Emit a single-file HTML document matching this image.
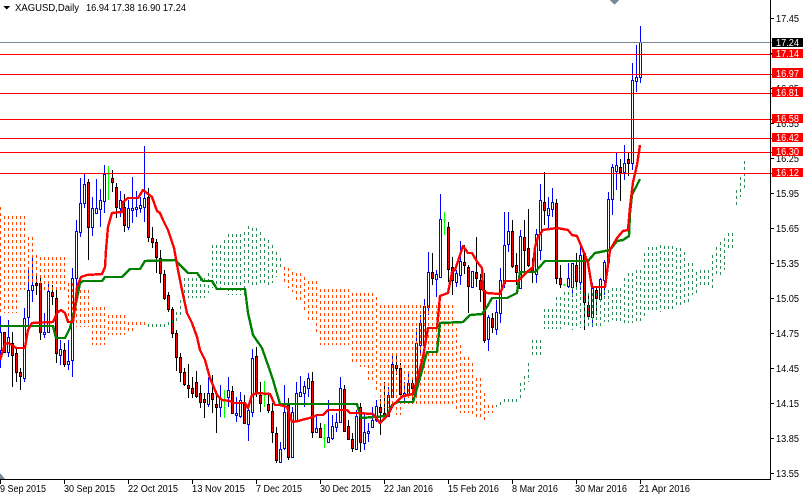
<!DOCTYPE html>
<html><head><meta charset="utf-8"><title>XAGUSD Daily</title>
<style>html,body{margin:0;padding:0;background:#fff;width:805px;height:497px;overflow:hidden}svg{display:block}text{font-family:"Liberation Sans",sans-serif;font-size:10px;fill:#000}</style></head>
<body>
<svg width="805" height="497" viewBox="0 0 805 497" xmlns="http://www.w3.org/2000/svg" shape-rendering="crispEdges">
<rect width="805" height="497" fill="#fff"/>
<!-- blue wicks -->
<path fill="none" stroke="#0000ff" d="M.5 316V368M8.5 320V357M24.5 308V382M28.5 270V325M32.5 257V302M44.5 313V338M48.5 283V333M60.5 340V365M68.5 340V370M72.5 268V377M76.5 220V290M80.5 178V237M84.5 173V208M92.5 197V236M96.5 179V213M100.5 189V227M104.5 165V213M120.5 191V217M128.5 200V230M132.5 177V223M136.5 191V217M140.5 197V213M144.5 146V222M208.5 377V407M220.5 385V417M228.5 377V407M236.5 397V422M240.5 392V418M248.5 407V441M252.5 349V417M280.5 442V462M284.5 385V450M292.5 407V457M296.5 382V420M300.5 376V397M304.5 381V407M308.5 373V397M316.5 415V432M328.5 400V443M332.5 415V440M336.5 413V432M340.5 377V423M356.5 410V450M364.5 413V450M368.5 423V442M372.5 407V427M376.5 400V422M388.5 387V417M392.5 356V397M404.5 382V403M408.5 374V397M416.5 328V395M420.5 315V353M424.5 299V347M428.5 252V315M436.5 270V297M440.5 194V277M456.5 270V287M460.5 241V285M472.5 272V287M488.5 315V351M496.5 300V335M500.5 268V323M504.5 212V288M508.5 212V252M520.5 230V288M536.5 229V283M540.5 184V260M548.5 197V230M552.5 188V217M568.5 263V288M572.5 263V297M580.5 245V290M592.5 283V327M600.5 278V300M604.5 260V295M608.5 192V265M612.5 164V215M616.5 153V190M624.5 145V180M632.5 63V170M636.5 45V92M640.5 26V83"/>
<!-- black wicks -->
<path fill="none" stroke="#000" d="M4.5 332V352M12.5 332V387M16.5 347V382M20.5 368V390M36.5 275V295M40.5 278V340M52.5 285V305M56.5 290V363M64.5 343V367M88.5 179V260M112.5 170V192M116.5 183V218M124.5 194V232M148.5 188V242M152.5 227V248M156.5 239V273M160.5 250V283M164.5 270V300M168.5 292V312M172.5 307V338M176.5 330V371M180.5 353V382M184.5 368V386M188.5 364V398M192.5 377V398M196.5 371V398M200.5 385V408M204.5 393V418M212.5 375V413M216.5 394V433M232.5 386V413M244.5 395V424M256.5 347V397M260.5 382V412M268.5 394V413M272.5 403V443M276.5 427V463M288.5 398V460M312.5 372V438M320.5 423V438M344.5 385V432M348.5 420V440M352.5 433V452M360.5 403V452M380.5 399V435M384.5 382V417M396.5 356V375M400.5 363V397M412.5 380V400M432.5 253V285M448.5 222V282M452.5 257V295M464.5 245V274M468.5 265V313M476.5 237V287M480.5 274V302M484.5 273V343M492.5 313V333M512.5 220V268M516.5 253V285M524.5 220V272M528.5 209V267M532.5 258V283M544.5 172V225M556.5 199V284M560.5 265V288M576.5 253V290M584.5 252V330M588.5 293V320M596.5 287V315M620.5 159V201M628.5 152V176"/>
<!-- green doji -->
<path fill="none" stroke="#00ff00" d="M108.5 166V200M107 174H110M224.5 390V418M223 400H226M264.5 381V407M263 395H266M324.5 424V448M323 438H326M444.5 212V235M443 220H446M564.5 284V286M563 285H566"/>
<!-- blue bodies -->
<path fill="#fff" stroke="#0000ff" d="M-.5 332.5h2V350.5h-2zM7.5 337.5h2V352.5h-2zM23.5 318.5h2V378.5h-2zM27.5 290.5h2V317.5h-2zM31.5 285.5h2V290.5h-2zM43.5 332.5h2V334.5h-2zM47.5 291.5h2V332.5h-2zM59.5 349.5h2V355.5h-2zM67.5 361.5h2V364.5h-2zM71.5 278.5h2V360.5h-2zM75.5 231.5h2V278.5h-2zM79.5 203.5h2V232.5h-2zM83.5 184.5h2V203.5h-2zM91.5 208.5h2V227.5h-2zM95.5 208.5h2V213.5h-2zM99.5 200.5h2V209.5h-2zM103.5 174.5h2V201.5h-2zM119.5 200.5h2V208.5h-2zM127.5 208.5h2V227.5h-2zM131.5 208.5h2V210.5h-2zM135.5 207.5h2V209.5h-2zM139.5 205.5h2V208.5h-2zM143.5 198.5h2V207.5h-2zM207.5 393.5h2V404.5h-2zM219.5 398.5h2V407.5h-2zM227.5 390.5h2V397.5h-2zM235.5 413.5h2V415.5h-2zM239.5 400.5h2V416.5h-2zM247.5 410.5h2V424.5h-2zM251.5 358.5h2V412.5h-2zM279.5 449.5h2V462.5h-2zM283.5 412.5h2V448.5h-2zM291.5 412.5h2V457.5h-2zM295.5 393.5h2V420.5h-2zM299.5 392.5h2V396.5h-2zM303.5 386.5h2V393.5h-2zM307.5 378.5h2V388.5h-2zM315.5 428.5h2V432.5h-2zM327.5 437.5h2V442.5h-2zM331.5 426.5h2V438.5h-2zM335.5 422.5h2V427.5h-2zM339.5 388.5h2V422.5h-2zM355.5 416.5h2V449.5h-2zM363.5 432.5h2V443.5h-2zM367.5 431.5h2V433.5h-2zM371.5 420.5h2V427.5h-2zM375.5 406.5h2V420.5h-2zM387.5 395.5h2V416.5h-2zM391.5 364.5h2V397.5h-2zM403.5 393.5h2V396.5h-2zM407.5 383.5h2V394.5h-2zM415.5 343.5h2V388.5h-2zM419.5 323.5h2V345.5h-2zM423.5 306.5h2V345.5h-2zM427.5 272.5h2V307.5h-2zM435.5 274.5h2V279.5h-2zM439.5 219.5h2V277.5h-2zM455.5 273.5h2V282.5h-2zM459.5 261.5h2V275.5h-2zM471.5 271.5h2V287.5h-2zM487.5 317.5h2V339.5h-2zM495.5 312.5h2V329.5h-2zM499.5 280.5h2V313.5h-2zM503.5 245.5h2V283.5h-2zM507.5 231.5h2V244.5h-2zM519.5 236.5h2V288.5h-2zM535.5 234.5h2V274.5h-2zM539.5 200.5h2V250.5h-2zM547.5 208.5h2V215.5h-2zM551.5 202.5h2V209.5h-2zM567.5 278.5h2V286.5h-2zM571.5 263.5h2V287.5h-2zM579.5 255.5h2V282.5h-2zM591.5 288.5h2V317.5h-2zM599.5 279.5h2V299.5h-2zM603.5 262.5h2V280.5h-2zM607.5 199.5h2V262.5h-2zM611.5 167.5h2V199.5h-2zM615.5 165.5h2V171.5h-2zM623.5 163.5h2V172.5h-2zM631.5 80.5h2V163.5h-2zM635.5 77.5h2V81.5h-2zM639.5 42.5h2V77.5h-2z"/>
<!-- red bodies -->
<path fill="#ff0000" stroke="#000" d="M3.5 332.5h2V352.5h-2zM11.5 343.5h2V355.5h-2zM15.5 353.5h2V372.5h-2zM19.5 372.5h2V376.5h-2zM35.5 283.5h2V285.5h-2zM39.5 283.5h2V332.5h-2zM51.5 292.5h2V296.5h-2zM55.5 298.5h2V353.5h-2zM63.5 350.5h2V364.5h-2zM87.5 182.5h2V227.5h-2zM111.5 178.5h2V182.5h-2zM115.5 187.5h2V207.5h-2zM123.5 207.5h2V225.5h-2zM147.5 197.5h2V237.5h-2zM151.5 238.5h2V242.5h-2zM155.5 242.5h2V257.5h-2zM159.5 258.5h2V273.5h-2zM163.5 274.5h2V298.5h-2zM167.5 295.5h2V309.5h-2zM171.5 309.5h2V333.5h-2zM175.5 333.5h2V357.5h-2zM179.5 357.5h2V372.5h-2zM183.5 372.5h2V384.5h-2zM187.5 385.5h2V388.5h-2zM191.5 388.5h2V393.5h-2zM195.5 382.5h2V396.5h-2zM199.5 393.5h2V402.5h-2zM203.5 399.5h2V402.5h-2zM211.5 393.5h2V399.5h-2zM215.5 404.5h2V407.5h-2zM231.5 391.5h2V413.5h-2zM243.5 404.5h2V423.5h-2zM255.5 356.5h2V393.5h-2zM259.5 395.5h2V403.5h-2zM267.5 404.5h2V410.5h-2zM271.5 411.5h2V432.5h-2zM275.5 433.5h2V460.5h-2zM287.5 405.5h2V457.5h-2zM311.5 381.5h2V432.5h-2zM319.5 428.5h2V437.5h-2zM343.5 389.5h2V431.5h-2zM347.5 426.5h2V439.5h-2zM351.5 439.5h2V448.5h-2zM359.5 407.5h2V442.5h-2zM379.5 407.5h2V412.5h-2zM383.5 413.5h2V416.5h-2zM395.5 365.5h2V368.5h-2zM399.5 368.5h2V394.5h-2zM411.5 383.5h2V388.5h-2zM431.5 272.5h2V278.5h-2zM447.5 227.5h2V269.5h-2zM451.5 267.5h2V280.5h-2zM463.5 262.5h2V265.5h-2zM467.5 267.5h2V286.5h-2zM475.5 272.5h2V278.5h-2zM479.5 280.5h2V289.5h-2zM483.5 290.5h2V340.5h-2zM491.5 318.5h2V327.5h-2zM511.5 231.5h2V266.5h-2zM515.5 265.5h2V272.5h-2zM523.5 237.5h2V250.5h-2zM527.5 248.5h2V265.5h-2zM531.5 268.5h2V272.5h-2zM543.5 202.5h2V210.5h-2zM555.5 203.5h2V278.5h-2zM559.5 278.5h2V284.5h-2zM575.5 265.5h2V281.5h-2zM583.5 253.5h2V302.5h-2zM587.5 305.5h2V316.5h-2zM595.5 290.5h2V298.5h-2zM619.5 167.5h2V172.5h-2zM627.5 159.5h2V163.5h-2z"/>
<!-- orange cloud -->
<path fill="none" stroke="#ff4500" stroke-dasharray="3 3" d="M.5 207V313M4.5 216V313M8.5 216V313M12.5 216V313M16.5 216V313M20.5 216V290M24.5 216V290M28.5 237V283M32.5 237V283M36.5 255V285M40.5 257V292M44.5 257V292M48.5 257V292M52.5 257V292M56.5 257V292M60.5 257V292M64.5 257V292M68.5 283V324M72.5 283V324M76.5 290V327M80.5 290V327M84.5 290V327M88.5 290V327M92.5 307V345M96.5 307V345M100.5 307V345M104.5 307V345M108.5 315V335M112.5 315V335M116.5 315V335M120.5 315V335M124.5 315V335M128.5 322V331M132.5 322V331M136.5 322V327M140.5 322V327M144.5 322V327M284.5 267V282M288.5 268V288M292.5 272V292M296.5 273V303M300.5 273V303M304.5 277V313M308.5 281V322M312.5 281V322M316.5 281V332M320.5 289V345M324.5 289V345M328.5 289V345M332.5 289V345M336.5 289V345M340.5 289V345M344.5 289V345M348.5 289V345M352.5 293V362M356.5 293V362M360.5 293V367M364.5 293V367M368.5 293V382M372.5 293V382M376.5 297V393M380.5 305V407M384.5 305V408M388.5 305V408M392.5 305V408M396.5 305V415M400.5 305V415M404.5 305V407M408.5 305V407M412.5 305V407M416.5 305V407M420.5 305V407M424.5 305V407M428.5 305V407M432.5 305V407M436.5 305V407M440.5 305V407M444.5 305V407M448.5 305V407M452.5 305V407M456.5 328V410M460.5 345V413M464.5 357V413M468.5 357V413M472.5 363V415M476.5 378V417M480.5 378V417M484.5 393V421M488.5 405V413M492.5 405V413"/>
<!-- green cloud -->
<path fill="none" stroke="#2e8b57" stroke-dasharray="3 3" d="M148.5 324V327M152.5 324V327M156.5 324V327M160.5 324V327M164.5 324V327M168.5 322V327M172.5 320V327M176.5 312V323M180.5 300V316M184.5 278V298M188.5 278V298M192.5 278V298M196.5 278V298M200.5 278V298M204.5 278V298M208.5 273V293M212.5 245V288M216.5 245V288M220.5 245V288M224.5 240V290M228.5 234V295M232.5 234V295M236.5 234V295M240.5 234V295M244.5 232V295M248.5 226V285M252.5 228V285M256.5 228V285M260.5 232V285M264.5 238V285M268.5 240V285M272.5 245V283M276.5 252V277M280.5 258V267M496.5 405V407M500.5 402V405M504.5 399V405M508.5 399V405M512.5 399V405M516.5 399V405M520.5 383V398M524.5 376V390M528.5 363V382M532.5 340V358M536.5 340V358M540.5 340V358M544.5 309V329M548.5 309V329M552.5 309V329M556.5 297V329M560.5 297V329M564.5 292V328M568.5 292V328M572.5 287V330M576.5 287V328M580.5 285V328M584.5 293V329M588.5 293V328M592.5 293V327M596.5 293V327M600.5 293V327M604.5 290V322M608.5 290V322M612.5 288V320M616.5 288V323M620.5 288V323M624.5 278V323M628.5 273V323M632.5 273V323M636.5 270V323M640.5 270V323M644.5 253V318M648.5 247V313M652.5 247V313M656.5 247V313M660.5 245V312M664.5 246V312M668.5 246V312M672.5 246V310M676.5 248V305M680.5 248V305M684.5 252V305M688.5 263V305M692.5 263V295M696.5 272V295M700.5 270V287M704.5 270V287M708.5 270V287M712.5 255V288M716.5 247V275M720.5 242V275M724.5 238V270M728.5 233V250M732.5 233V250M736.5 190V207M740.5 177V197M744.5 161V188"/>
<!-- senkou/kijun lines -->
<polyline fill="none" stroke="#008000" stroke-width="2.4" stroke-linejoin="round" points="0,326 53,326 56,338 65,338 70,328 75,308 80,283 83,281 102,281 105,277 122,277 130,269 140,269 145,261 175,260 182,267 188,273 197,273 203,281 212,281 217,289 245,289 248,313 253,335 262,348 269,368 273,380 280,404 357,404 361,418 387,416 392,405 398,402 413,402 418,385 427,352 437,352 440,323 463,322 470,315 482,314 487,307 492,298 507,298 517,293 520,272 535,272 545,261 588,261 595,253 610,250 617,241 623,240 629,236 630,213 632,195 640,179"/>
<polyline fill="none" stroke="#ff0000" stroke-width="2.4" stroke-linejoin="round" points="0,360 5,344 8,343 12,345 16,348 25,348 28,330 32,323 53,322 57,313 61,310 65,313 68,322 73,322 75,307 77,287 81,277 87,275 102,274 105,267 106,250 108,227 112,213 122,212 123,202 128,198 138,198 143,190 152,197 157,211 160,213 163,220 168,230 174,248 178,270 182,290 187,313 192,323 197,337 200,350 205,360 210,378 217,395 222,400 230,401 233,403 245,403 248,408 252,395 257,393 270,394 275,405 280,405 287,407 292,422 298,421 313,417 317,415 323,415 328,410 347,410 350,413 358,413 373,414 380,423 388,415 393,405 403,396 413,394 417,380 423,357 428,328 437,328 440,296 448,293 452,272 455,270 463,246 468,253 472,253 478,263 482,268 483,290 487,293 500,294 505,281 518,281 527,272 533,267 535,247 538,237 543,230 557,228 568,230 572,235 577,236 582,248 588,263 592,287 605,287 610,250 617,238 623,231 628,230 630,207 633,182 637,165 640,145"/>
<!-- horizontal levels -->
<path fill="none" stroke="#778899" d="M0 42.5H772"/>
<path fill="none" stroke="#ff0000" d="M0 54.5H772M0 74.5H772M0 93.5H772M0 119.5H772M0 138.5H772M0 152.5H772M0 173.5H772"/>
<!-- axes -->
<path fill="none" stroke="#000" d="M0 479.5H771M770.5 0V480M.5 480V484M64.5 480V484M128.5 480V484M192.5 480V484M256.5 480V484M320.5 480V484M384.5 480V484M448.5 480V484M512.5 480V484M576.5 480V484M640.5 480V484M771 18.5H774M771 53.5H774M771 88.5H774M771 123.5H774M771 158.5H774M771 193.5H774M771 228.5H774M771 263.5H774M771 298.5H774M771 333.5H774M771 368.5H774M771 403.5H774M771 438.5H774M771 473.5H774"/>
<polygon points="3,6 10,6 6.5,9.5" fill="#000"/>
<polygon points="610,0 619,0 614.5,5" fill="#778899"/>
<polygon points="0,473 5,479 0,479" fill="#778899"/>
<!-- text -->
<text x="15" y="11" textLength="64" lengthAdjust="spacingAndGlyphs">XAGUSD,Daily</text>
<text x="86" y="11" textLength="100" lengthAdjust="spacingAndGlyphs">16.94 17.38 16.90 17.24</text>
<g>
<text x="776" y="22" textLength="23" lengthAdjust="spacingAndGlyphs">17.45</text>
<text x="776" y="92" textLength="23" lengthAdjust="spacingAndGlyphs">16.85</text>
<text x="776" y="127" textLength="23" lengthAdjust="spacingAndGlyphs">16.55</text>
<text x="776" y="162" textLength="23" lengthAdjust="spacingAndGlyphs">16.25</text>
<text x="776" y="197" textLength="23" lengthAdjust="spacingAndGlyphs">15.95</text>
<text x="776" y="232" textLength="23" lengthAdjust="spacingAndGlyphs">15.65</text>
<text x="776" y="267" textLength="23" lengthAdjust="spacingAndGlyphs">15.35</text>
<text x="776" y="302" textLength="23" lengthAdjust="spacingAndGlyphs">15.05</text>
<text x="776" y="337" textLength="23" lengthAdjust="spacingAndGlyphs">14.75</text>
<text x="776" y="372" textLength="23" lengthAdjust="spacingAndGlyphs">14.45</text>
<text x="776" y="407" textLength="23" lengthAdjust="spacingAndGlyphs">14.15</text>
<text x="776" y="442" textLength="23" lengthAdjust="spacingAndGlyphs">13.85</text>
<text x="776" y="477" textLength="23" lengthAdjust="spacingAndGlyphs">13.55</text>
</g>
<!-- price tags -->
<rect x="772" y="38" width="31" height="9" fill="#000"/>
<rect x="772" y="49" width="31" height="9" fill="#ff0000"/>
<rect x="772" y="68" width="31" height="10" fill="#ff0000"/>
<rect x="772" y="87" width="31" height="10" fill="#ff0000"/>
<rect x="772" y="114" width="31" height="9" fill="#ff0000"/>
<rect x="772" y="133" width="31" height="9" fill="#ff0000"/>
<rect x="772" y="147" width="31" height="9" fill="#ff0000"/>
<rect x="772" y="168" width="31" height="9" fill="#ff0000"/>
<g>
<text x="776" y="46" textLength="23" lengthAdjust="spacingAndGlyphs" style="fill:#fff">17.24</text>
<text x="776" y="57" textLength="23" lengthAdjust="spacingAndGlyphs" style="fill:#fff">17.14</text>
<text x="776" y="77" textLength="23" lengthAdjust="spacingAndGlyphs" style="fill:#fff">16.97</text>
<text x="776" y="96" textLength="23" lengthAdjust="spacingAndGlyphs" style="fill:#fff">16.81</text>
<text x="776" y="122" textLength="23" lengthAdjust="spacingAndGlyphs" style="fill:#fff">16.58</text>
<text x="776" y="141" textLength="23" lengthAdjust="spacingAndGlyphs" style="fill:#fff">16.42</text>
<text x="776" y="155" textLength="23" lengthAdjust="spacingAndGlyphs" style="fill:#fff">16.30</text>
<text x="776" y="176" textLength="23" lengthAdjust="spacingAndGlyphs" style="fill:#fff">16.12</text>
</g>
<!-- date labels -->
<text x="0" y="492" textLength="46" lengthAdjust="spacingAndGlyphs">9 Sep 2015</text>
<text x="64" y="492" textLength="51" lengthAdjust="spacingAndGlyphs">30 Sep 2015</text>
<text x="128" y="492" textLength="50" lengthAdjust="spacingAndGlyphs">22 Oct 2015</text>
<text x="192" y="492" textLength="53" lengthAdjust="spacingAndGlyphs">13 Nov 2015</text>
<text x="256" y="492" textLength="46" lengthAdjust="spacingAndGlyphs">7 Dec 2015</text>
<text x="320" y="492" textLength="51" lengthAdjust="spacingAndGlyphs">30 Dec 2015</text>
<text x="384" y="492" textLength="49" lengthAdjust="spacingAndGlyphs">22 Jan 2016</text>
<text x="448" y="492" textLength="51" lengthAdjust="spacingAndGlyphs">15 Feb 2016</text>
<text x="512" y="492" textLength="46" lengthAdjust="spacingAndGlyphs">8 Mar 2016</text>
<text x="575" y="492" textLength="52" lengthAdjust="spacingAndGlyphs">30 Mar 2016</text>
<text x="639" y="492" textLength="51" lengthAdjust="spacingAndGlyphs">21 Apr 2016</text>
</svg>
</body></html>
